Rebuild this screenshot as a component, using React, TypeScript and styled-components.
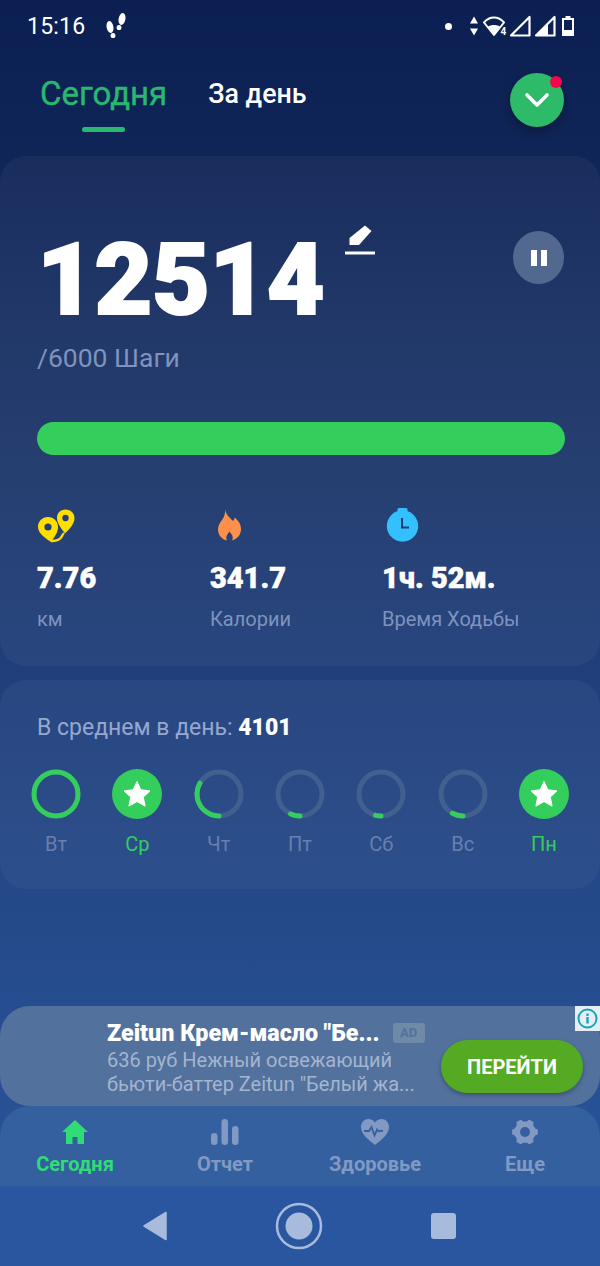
import React from "react"
import styled, { createGlobalStyle } from "styled-components"

const GlobalStyle = createGlobalStyle`
  * { box-sizing: border-box; }
  html, body { margin: 0; padding: 0; background: #0b1f52; }
  body { font-family: Roboto, "Noto Sans", sans-serif; }
`

interface Day {
  label: string
  progress: number
  done?: boolean
}

const days: Day[] = [
  { label: "Вт", progress: 1 },
  { label: "Ср", progress: 1, done: true },
  { label: "Чт", progress: 0.33 },
  { label: "Пт", progress: 0.07 },
  { label: "Сб", progress: 0.04 },
  { label: "Вс", progress: 0.08 },
  { label: "Пн", progress: 1, done: true },
]

// six teeth pointing left and right, so the gear is wider than tall
const gearPoints = Array.from({ length: 6 })
  .flatMap((_, k) => {
    const a = k * 60
    return [
      [a - 30, 9.5],
      [a - 15, 10],
      [a - 9, 12],
      [a + 9, 12],
      [a + 15, 10],
    ]
  })
  .map(([deg, r]) => {
    const rad = (deg * Math.PI) / 180
    return `${(14 + r * Math.cos(rad)).toFixed(2)},${(13 + r * Math.sin(rad)).toFixed(2)}`
  })
  .join(" ")

const Ring: React.FC<{ progress: number }> = ({ progress }) => {
  const r = 22
  const c = 2 * Math.PI * r
  return (
    <svg width="50" height="50" viewBox="0 0 50 50">
      <circle cx="25" cy="25" r={r} fill="none" stroke="#41608f" strokeWidth="5" />
      <circle
        cx="25"
        cy="25"
        r={r}
        fill="none"
        stroke="#34ce5c"
        strokeWidth="5"
        strokeLinecap={progress < 1 ? "round" : "butt"}
        strokeDasharray={`${c * progress} ${c}`}
        transform="rotate(90 25 25)"
      />
    </svg>
  )
}

const StarBadge = () => (
  <svg width="50" height="50" viewBox="0 0 50 50">
    <circle cx="25" cy="25" r="25" fill="#34ce5c" />
    <path
      d="M25 12.5l3.9 8.3 9.1 1.1-6.7 6.2 1.8 9-8.1-4.5-8.1 4.5 1.8-9-6.7-6.2 9.1-1.1z"
      fill="#fff"
      stroke="#fff"
      strokeWidth="1"
      strokeLinejoin="round"
    />
  </svg>
)

const App: React.FC = () => {
  return (
    <Screen>
      <GlobalStyle />
      <StatusBar>
        <StatusLeft>
          <Time>15:16</Time>
          <svg width="22" height="26" viewBox="0 0 22 26" fill="#fff">
            <ellipse cx="4" cy="14" rx="3.400" ry="6" transform="rotate(-10 4 14)" />
            <ellipse cx="7" cy="22.500" rx="2.400" ry="2.600" />
            <ellipse cx="16" cy="6" rx="3.400" ry="6" transform="rotate(10 16 6)" />
            <ellipse cx="13" cy="14.500" rx="2.400" ry="2.600" />
          </svg>
        </StatusLeft>
        <StatusRight>
          <Dot />
          <svg width="12" height="22" viewBox="0 0 12 22" fill="#fff">
            <path d="M5 1.500l4 7H1zM5 20.500l-4-7h8z" />
          </svg>
          <svg width="24" height="22" viewBox="0 0 24 22" fill="none">
            <path d="M1 7.500C4 4 8 2.500 11 2.500s7 1.500 10 5L11 20z" stroke="#fff" strokeWidth="2" strokeLinejoin="round" />
            <path d="M5 11.500c3.500-2 8.500-2 12 0L11 20z" fill="#fff" />
            <text x="17.500" y="20" fill="#fff" fontSize="10" fontWeight="700" fontFamily="Roboto">4</text>
          </svg>
          <svg width="22" height="22" viewBox="0 0 22 22" fill="none">
            <path d="M20.500 2v18.500H2z" stroke="#fff" strokeWidth="2.200" strokeLinejoin="round" />
          </svg>
          <SignalFull width="22" height="22" viewBox="0 0 22 22" fill="none">
            <path d="M20.500 2v18.500H2z" stroke="#fff" strokeWidth="2.200" strokeLinejoin="round" />
            <path d="M14 9v11.500H2z" fill="#fff" />
          </SignalFull>
          <BatteryIcon width="14" height="22" viewBox="0 0 14 22" fill="none">
            <path d="M4.500 1h5v2h3.500v18H1V3h3.500z" fill="#fff" />
            <rect x="3" y="5" width="8" height="10" fill="#0c2053" />
          </BatteryIcon>
        </StatusRight>
      </StatusBar>

      <Header>
        <Tabs>
          <ActiveTab>
            Сегодня
            <TabMark />
          </ActiveTab>
          <Tab>За день</Tab>
        </Tabs>
        <Fab>
          <svg width="26" height="18" viewBox="0 0 26 18" fill="none">
            <path d="M3 4l10 10L23 4" stroke="#fff" strokeWidth="3.600" strokeLinecap="round" strokeLinejoin="round" />
          </svg>
          <FabDot />
        </Fab>
      </Header>

      <MainCard>
        <TopRow>
          <Count>12514</Count>
          <EditIcon viewBox="0 0 30 30" width="30" height="30" fill="#fff">
            <path d="M20 0.500l6.500 5.500-12.500 14H4.500v-7z" />
            <rect x="0" y="26.500" width="30" height="3" />
          </EditIcon>
          <PauseButton>
            <svg width="18" height="18" viewBox="0 0 18 18" fill="#fff">
              <rect x="1" y="1" width="6" height="16" />
              <rect x="11" y="1" width="6" height="16" />
            </svg>
          </PauseButton>
        </TopRow>
        <Goal>/6000 Шаги</Goal>
        <Progress />
        <Stats>
          <Stat>
            <StatIcon>
              <svg width="38" height="34" viewBox="0 0 38 34">
                <path d="M11 8c6 0 10 4.500 10 10 0 6-4 10.500-7 15C10 30 1 25 1 18 1 12.500 5 8 11 8z" fill="#ffde00" />
                <path d="M28.500 0.500c5 0 9 3.500 9 8.500 0 6-5 11-9.500 15.500C25 20 20 15 20 9c0-5 3.500-8.500 8.500-8.500z" fill="#ffde00" />
                <circle cx="11" cy="18" r="3.600" fill="#233f77" />
                <circle cx="28.500" cy="9" r="3.200" fill="#233f77" />
                <path d="M14 32c7 .5 9.500-2 11-5 .5-1 1-2 2-3" stroke="#ffde00" strokeWidth="2.400" fill="none" />
              </svg>
            </StatIcon>
            <StatValue>7.76</StatValue>
            <StatLabel>км</StatLabel>
          </Stat>
          <Stat>
            <StatIcon>
              <svg width="38" height="34" viewBox="0 0 38 34">
                <path
                  d="M15 .5C16 4 17 6 20 9c1.500 1.500 2.500 2.500 3 3 1-1 1.500-2 1.500-3.500C28 11 31 15 31 20c0 6-4 10-9 11.500 1-2 1-3.500 0-5.500l-2.500-3.500L17 26c-1 2-1 3.500 0 5.500-5-1-9-5.500-9-11 0-4 2-7 4-9.500 2-3 3.500-6 3-10.500z"
                  fill="#ff8f4b"
                />
              </svg>
            </StatIcon>
            <StatValue>341.7</StatValue>
            <StatLabel>Калории</StatLabel>
          </Stat>
          <Stat>
            <StatIcon>
              <svg width="38" height="36" viewBox="0 0 38 36">
                <rect x="15.500" y="0" width="10" height="5" rx="1.500" fill="#34c0ff" />
                <circle cx="20.500" cy="18" r="15.700" fill="#34c0ff" />
                <path d="M20 10v9.500h7" stroke="#1b3a6f" strokeWidth="2" fill="none" />
              </svg>
            </StatIcon>
            <StatValue>1ч. 52м.</StatValue>
            <StatLabel>Время Ходьбы</StatLabel>
          </Stat>
        </Stats>
      </MainCard>

      <WeekCard>
        <Average>
          В среднем в день: <b>4101</b>
        </Average>
        <Week>
          {days.map((day) => (
            <DayCell key={day.label}>
              {day.done ? <StarBadge /> : <Ring progress={day.progress} />}
              <DayLabel $done={day.done}>{day.label}</DayLabel>
            </DayCell>
          ))}
        </Week>
      </WeekCard>

      <Ad>
        <AdText>
          <AdTitleRow>
            <AdTitle>Zeitun Крем-масло "Бе...</AdTitle>
            <AdBadge>AD</AdBadge>
          </AdTitleRow>
          <AdBody>636 руб Нежный освежающий</AdBody>
          <AdBody>бьюти-баттер Zeitun "Белый жа...</AdBody>
        </AdText>
        <AdButton>ПЕРЕЙТИ</AdButton>
        <AdInfo>
          <svg width="21" height="21" viewBox="0 0 21 21" fill="none">
            <circle cx="10.500" cy="10.500" r="9" stroke="#15a6b8" strokeWidth="2" />
            <rect x="9.300" y="9" width="2.400" height="6.500" fill="#15a6b8" />
            <rect x="9.300" y="5.500" width="2.400" height="2.400" fill="#15a6b8" />
          </svg>
        </AdInfo>
      </Ad>

      <TabBar>
        <TabItem $active>
          <svg width="28" height="26" viewBox="0 0 28 26" fill="currentColor">
            <path d="M14 1L1 13h4v12h6.500v-7h5v7H23V13h4z" strokeLinejoin="round" />
          </svg>
          Сегодня
        </TabItem>
        <TabItem>
          <svg width="30" height="26" viewBox="0 0 30 26" fill="currentColor">
            <rect x="1" y="14" width="6.500" height="12" rx="3.200" />
            <rect x="11.500" y="0" width="6.500" height="26" rx="3.200" />
            <rect x="22" y="7" width="6.500" height="19" rx="3.200" />
          </svg>
          Отчет
        </TabItem>
        <TabItem>
          <svg width="30" height="26" viewBox="0 0 30 26">
            <path
              d="M15 26C9 21 1 15.500 1 8 1 3.500 4.500 0 8.500 0 11 0 13.500 1.300 15 3.500 16.500 1.300 19 0 21.500 0 25.500 0 29 3.500 29 8c0 7.500-8 13-14 18z"
              fill="currentColor"
            />
            <path d="M4 12h5l2.500-4 3 8.500 2.500-6 1.500 2 2-.8 2.500.3" stroke="#34609f" strokeWidth="1.800" fill="none" />
          </svg>
          Здоровье
        </TabItem>
        <TabItem>
          <svg width="28" height="26" viewBox="0 0 28 26">
            <polygon points={gearPoints} fill="currentColor" stroke="currentColor" strokeWidth="2" strokeLinejoin="round" />
            <circle cx="14" cy="13" r="5" fill="#34609f" />
          </svg>
          Еще
        </TabItem>
      </TabBar>

      <NavBar>
        <svg width="26" height="30" viewBox="0 0 26 30" fill="#a9bbdc">
          <path d="M24 1.500v27L2 15z" stroke="#a9bbdc" strokeWidth="1.500" strokeLinejoin="round" />
        </svg>
        <svg width="48" height="48" viewBox="0 0 48 48" fill="none">
          <circle cx="24" cy="24" r="22" stroke="#a9bbdc" strokeWidth="2.500" />
          <circle cx="24" cy="24" r="13.500" fill="#a9bbdc" />
        </svg>
        <NavSquare />
      </NavBar>
    </Screen>
  )
}

const Screen = styled.div`
  width: 600px;
  height: 1266px;
  display: flex;
  flex-direction: column;
  overflow: hidden;
  color: #fff;
  background: linear-gradient(180deg, #0b1f52 0%, #102557 12%, #1d376a 35%, #21407c 55%, #254b8c 75%, #29569f 100%);
`

const StatusBar = styled.div`
  height: 52px;
  flex: none;
  display: flex;
  align-items: center;
  justify-content: space-between;
  padding: 0 25px 0 27px;
`

const StatusLeft = styled.div`
  display: flex;
  align-items: center;
  gap: 21px;
`

const Time = styled.span`
  font-size: 23px;
  letter-spacing: 0.2px;
`

const StatusRight = styled.div`
  display: flex;
  align-items: center;
  gap: 2px;
`

const SignalFull = styled.svg`
  margin-left: 1px;
`

const BatteryIcon = styled.svg`
  margin-left: 3px;
`

const Dot = styled.span`
  width: 7px;
  height: 7px;
  margin-right: 15px;
  border-radius: 50%;
  background: #fff;
`

const Header = styled.div`
  height: 104px;
  flex: none;
  display: flex;
  justify-content: space-between;
  padding: 21px 36px 0 40px;
`

const Tabs = styled.div`
  display: flex;
  align-items: flex-start;
  gap: 41px;
`

const Tab = styled.div`
  font-size: 26.800px;
  font-weight: 500;
  line-height: 40px;
  margin-top: 1px;
`

const ActiveTab = styled.div`
  display: flex;
  flex-direction: column;
  align-items: center;
  font-size: 33px;
  line-height: 42px;
  color: #29b86e;
  -webkit-text-stroke: 0.4px #29b86e;
`

const TabMark = styled.span`
  width: 43px;
  height: 5px;
  margin-top: 12px;
  border-radius: 3px;
  background: #29b86e;
`

const Fab = styled.div`
  position: relative;
  width: 54px;
  height: 54px;
  display: flex;
  align-items: center;
  justify-content: center;
  border-radius: 50%;
  background: #2dba69;
  box-shadow: 0 4px 10px rgba(0, 0, 0, 0.3);
`

const FabDot = styled.span`
  position: absolute;
  top: 3px;
  right: 2px;
  width: 12px;
  height: 12px;
  border-radius: 50%;
  background: #f5074d;
`

const Card = styled.section`
  flex: none;
  border-radius: 26px;
  background: rgba(255, 255, 255, 0.04);
`

const MainCard = styled(Card)`
  height: 510px;
  padding: 64px 35px 0 37px;
`

const TopRow = styled.div`
  position: relative;
  display: flex;
  align-items: flex-start;
  height: 110px;
`

const Count = styled.div`
  font-size: 100px;
  font-weight: 900;
  line-height: 120px;
  letter-spacing: -0.500px;
  -webkit-text-stroke: 2px #fff;
`

const EditIcon = styled.svg`
  margin: 5px 0 0 21px;
`

const PauseButton = styled.div`
  width: 51px;
  height: 53px;
  margin: 11px 1px 0 auto;
  display: flex;
  align-items: center;
  justify-content: center;
  border-radius: 50%;
  background: #52688f;
`

const Goal = styled.div`
  margin-top: 11px;
  font-size: 26.500px;
  line-height: 34px;
  color: #7f93bf;
`

const Progress = styled.div`
  height: 33px;
  margin-top: 47px;
  border-radius: 17px;
  background: #34ce5c;
`

const Stats = styled.div`
  display: grid;
  grid-template-columns: 173px 172px 1fr;
  margin-top: 52px;
`

const Stat = styled.div`
  display: flex;
  flex-direction: column;
`

const StatIcon = styled.div`
  height: 38px;
  display: flex;
  align-items: center;
`

const StatValue = styled.div`
  margin-top: 15px;
  font-size: 29px;
  font-weight: 900;
  line-height: 36px;
  -webkit-text-stroke: 0.5px #fff;
`

const StatLabel = styled.div`
  margin-top: 10px;
  font-size: 20px;
  line-height: 26px;
  color: #7f93bf;
`

const WeekCard = styled(Card)`
  height: 209px;
  margin-top: 14px;
  padding: 33px 31px 0;
`

const Average = styled.div`
  padding-left: 6px;
  font-size: 23px;
  line-height: 30px;
  color: #94a8d0;

  b {
    font-weight: 900;
    color: #fff;
  }
`

const Week = styled.div`
  display: flex;
  justify-content: space-between;
  margin-top: 26px;
`

const DayCell = styled.div`
  width: 50px;
  display: flex;
  flex-direction: column;
  align-items: center;
`

const DayLabel = styled.span<{ $done?: boolean }>`
  margin-top: 12px;
  font-size: 20px;
  line-height: 26px;
  color: ${({ $done }) => ($done ? "#34ce5c" : "#6880ae")};
`

const Ad = styled.div`
  position: relative;
  height: 100px;
  flex: none;
  margin-top: auto;
  display: flex;
  align-items: flex-start;
  justify-content: space-between;
  padding: 0 17px 0 107px;
  border-radius: 30px;
  background: #53719d;
`

const AdText = styled.div`
  padding-top: 11px;
`

const AdTitleRow = styled.div`
  display: flex;
  align-items: center;
  gap: 13px;
  height: 31px;
`

const AdTitle = styled.div`
  font-size: 23.300px;
  font-weight: 900;
  white-space: nowrap;
`

const AdBadge = styled.span`
  width: 32px;
  height: 20px;
  display: flex;
  align-items: center;
  justify-content: center;
  border-radius: 3px;
  font-size: 13px;
  font-weight: 700;
  color: #53719d;
  background: #6f8aa6;
`

const AdBody = styled.div`
  font-size: 20px;
  line-height: 24px;
  white-space: nowrap;
  color: #a3b5cf;
`

const AdButton = styled.div`
  width: 142px;
  height: 53px;
  margin-top: 34px;
  display: flex;
  align-items: center;
  justify-content: center;
  border-radius: 27px;
  font-size: 20px;
  font-weight: 700;
  background: #54aa23;
  box-shadow: 0 2px 4px rgba(0, 0, 0, 0.3);
`

const AdInfo = styled.div`
  position: absolute;
  top: 0;
  right: 0;
  width: 25px;
  height: 25px;
  display: flex;
  align-items: center;
  justify-content: center;
  background: #e6eef4;
`

const TabBar = styled.nav`
  height: 80px;
  flex: none;
  display: grid;
  grid-template-columns: repeat(4, 150px);
  padding-top: 13px;
  border-radius: 30px 30px 0 0;
  background: #34609f;
`

const TabItem = styled.div<{ $active?: boolean }>`
  display: flex;
  flex-direction: column;
  align-items: center;
  gap: 6px;
  font-size: 20px;
  font-weight: 700;
  line-height: 26px;
  color: ${({ $active }) => ($active ? "#2fdc76" : "#8299c4")};
`

const NavBar = styled.div`
  height: 80px;
  flex: none;
  display: grid;
  grid-template-columns: 24px 48px 26px;
  justify-content: center;
  column-gap: 108px;
  align-items: center;
  background: #29569f;

  & > svg:first-child {
    margin-left: -1px;
  }
`

const NavSquare = styled.span`
  width: 25px;
  height: 26px;
  border-radius: 3px;
  background: #a9bbdc;
`

export default App
